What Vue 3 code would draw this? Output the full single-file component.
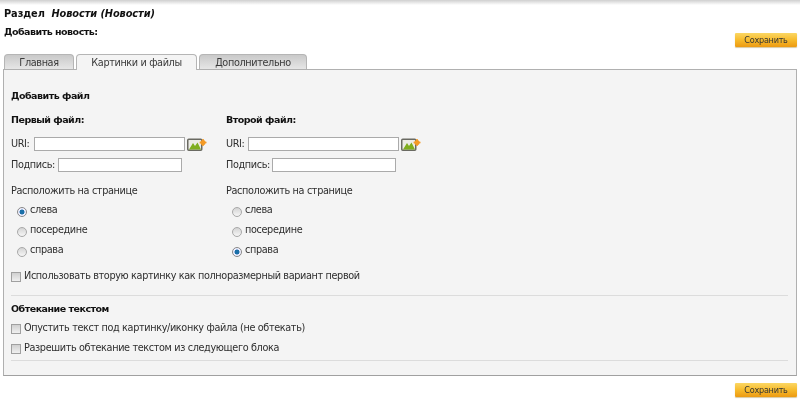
<script setup>
const columns = [
  { title: 'Первый файл:', selected: 'слева' },
  { title: 'Второй файл:', selected: 'справа' }
]
const places = ['слева', 'посередине', 'справа']
</script>

<template>
  <div class="page">
    <div class="topshadow"></div>
    <div class="head">
      <div class="heading">
        <div class="section">Раздел&nbsp; <em>Новости (Новости)</em></div>
        <div class="add">Добавить новость:</div>
      </div>
      <button class="save top">Сохранить</button>
    </div>
    <div class="tabs">
      <div class="tab t1">Главная</div>
      <div class="tab t2 active">Картинки и файлы</div>
      <div class="tab t3">Дополнительно</div>
    </div>
    <div class="panel">
      <div class="bold h-file">Добавить файл</div>
      <div class="cols">
        <div v-for="c in columns" :key="c.title" class="col">
          <div class="bold ctitle">{{ c.title }}</div>
          <div class="row uri">
            <span class="lab l-uri">URI:</span>
            <span class="input w-uri"></span>
            <svg class="pic" width="20" height="14" viewBox="0 0 20 14">
              <rect x="0.75" y="2.25" width="14" height="11" rx="1" fill="#ecece6" stroke="#6a6a62" stroke-width="1.5"/>
              <path d="M2 12.5 L6 6 L8 9 L10.5 5.5 L14 12.5 Z" fill="#7fae1e"/>
              <circle cx="16" cy="5.5" r="2.6" fill="#f39a26"/>
              <path d="M16 2 V9 M12.6 5.5 H19.5" stroke="#f39a26" stroke-width="1.6"/>
            </svg>
          </div>
          <div class="row sign">
            <span class="lab l-sign">Подпись:</span>
            <span class="input w-sign"></span>
          </div>
          <div class="place">Расположить на странице</div>
          <div v-for="p in places" :key="p" class="radio">
            <span class="rb" :class="{ on: p === c.selected }"></span>{{ p }}
          </div>
        </div>
      </div>
      <div class="check first"><span class="cb"></span>Использовать вторую картинку как полноразмерный вариант первой</div>
      <div class="line l1"></div>
      <div class="bold wrap">Обтекание текстом</div>
      <div class="check c2"><span class="cb"></span>Опустить текст под картинку/иконку файла (не обтекать)</div>
      <div class="check c3"><span class="cb"></span>Разрешить обтекание текстом из следующего блока</div>
      <div class="line l2"></div>
    </div>
    <div class="foot"><button class="save">Сохранить</button></div>
  </div>
</template>

<style scoped>
.page {
  width: 800px;
  height: 404px;
  overflow: hidden;
  background: #fff;
  color: #2e2e2e;
  font-family: "DejaVu Sans", Verdana, sans-serif;
  font-size: 9.7px;
  letter-spacing: -0.36px;
  line-height: 12px;
  filter: blur(0.3px);
}
.topshadow {
  height: 5px;
  background: linear-gradient(#cfcfcf, #fff);
}
.head {
  display: flex;
  justify-content: space-between;
  align-items: flex-start;
  height: 49px;
  padding: 0 3px 0 4px;
}
.section {
  margin-top: 3px;
  color: #111;
  font-weight: bold;
  font-size: 9.8px;
  letter-spacing: -0.08px;
}
.section em { font-style: italic; font-weight: bold; }
.add {
  margin-top: 6px;
  font-weight: bold;
  font-size: 9.5px;
  letter-spacing: -0.5px;
  color: #111;
}
.save {
  display: block;
  width: 62px;
  height: 14px;
  padding: 0;
  border: 0;
  border-radius: 1px;
  background: linear-gradient(#fbd765, #f7bb2c 50%, #ec9a12);
  box-shadow: 0 1px 1px #d6c9a4;
  color: #333;
  font: 8.1px/14px "DejaVu Sans", sans-serif;
  letter-spacing: -0.25px;
  text-align: center;
}
.save.top { margin-top: 28px; }
.tabs {
  display: flex;
  height: 15px;
  padding-left: 4px;
  gap: 2px;
}
.tab {
  height: 15px;
  box-sizing: border-box;
  padding-top: 2px;
  border: 1px solid #b5b5b5;
  border-bottom: 0;
  border-radius: 4px 4px 0 0;
  background: linear-gradient(#c9c9c9, #e6e6e6);
  text-align: center;
  color: #3a3a3a;
}
.tab.t1 { width: 70px; }
.tab.t2 { width: 121px; height: 16px; background: #f4f4f4; position: relative; z-index: 1; }
.tab.t3 { width: 108px; }
.panel {
  box-sizing: border-box;
  width: 794px;
  height: 307px;
  margin-left: 3px;
  padding: 0 8px 0 7px;
  background: #f4f4f4;
  border: 1px solid #b0b0b0;
  border-bottom-color: #a0a0a0;
}
.bold { font-weight: bold; font-size: 9.5px; letter-spacing: -0.5px; color: #111; }
.h-file { margin-top: 20px; }
.cols { display: flex; margin-top: 12px; }
.col { width: 215px; }
.ctitle { height: 12px; }
.row { display: flex; align-items: center; }
.uri { margin-top: 11px; height: 14px; }
.sign { margin-top: 7px; height: 14px; }
.lab { flex: none; }
.l-uri { width: 23px; }
.l-sign { width: 47px; }
.col + .col .l-uri { width: 22px; }
.col + .col .l-sign { width: 46px; }
.input {
  display: block;
  box-sizing: border-box;
  height: 14px;
  background: #fff;
  border: 1px solid #aaa;
}
.w-uri { width: 151px; }
.w-sign { width: 124px; }
.pic { margin-left: 2px; }
.place { margin-top: 13px; height: 15px; }
.radio {
  display: flex;
  align-items: center;
  height: 20px;
  padding-left: 6px;
}
.rb {
  box-sizing: border-box;
  width: 10px;
  height: 10px;
  margin-right: 3px;
  margin-top: 4px;
  border: 1px solid #a8a8a8;
  border-radius: 50%;
  background: linear-gradient(#d4d4d4, #f6f6f6);
}
.rb.on {
  background: radial-gradient(circle, #1a6fa8 0 2.2px, #eef 2.8px);
  border-color: #888;
}
.check { display: flex; align-items: center; height: 14px; white-space: nowrap; }
.first { margin-top: 9px; }
.cb {
  box-sizing: border-box;
  width: 10px;
  height: 10px;
  margin-right: 3px;
  margin-top: 2px;
  border: 1px solid #a0a0a0;
  background: linear-gradient(#d0d0d0, #f0f0f0);
}
.line { height: 1px; background: #dcdcdc; }
.l1 { margin-top: 12px; }
.wrap { margin-top: 7px; }
.c2 { margin-top: 6px; }
.c3 { margin-top: 6px; }
.l2 { margin-top: 5px; }
.foot {
  display: flex;
  justify-content: flex-end;
  padding: 7px 3px 0 0;
}
</style>

<style>
html, body { margin: 0; background: #fff; }
</style>
